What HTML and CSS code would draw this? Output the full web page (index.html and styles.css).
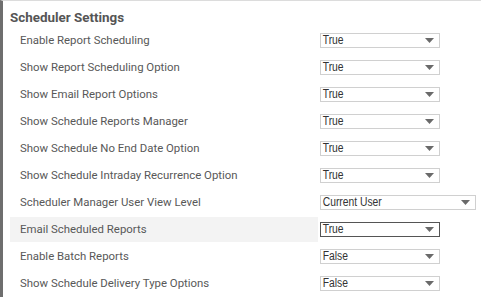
FILE: index.html
```html
<!DOCTYPE html>
<html>
<head>
<meta charset="utf-8">
<link rel="stylesheet" href="styles.css">
</head>
<body>
<div class="panel">
  <div class="title">Scheduler Settings</div>
  <div class="row"><div class="label">Enable Report Scheduling</div><div class="sel"><span>True</span><svg class="arr" width="9" height="5" viewBox="0 0 9 5"><path d="M0 0H9L4.5 5Z"/></svg></div></div>
  <div class="row"><div class="label">Show Report Scheduling Option</div><div class="sel"><span>True</span><svg class="arr" width="9" height="5" viewBox="0 0 9 5"><path d="M0 0H9L4.5 5Z"/></svg></div></div>
  <div class="row"><div class="label">Show Email Report Options</div><div class="sel"><span>True</span><svg class="arr" width="9" height="5" viewBox="0 0 9 5"><path d="M0 0H9L4.5 5Z"/></svg></div></div>
  <div class="row"><div class="label">Show Schedule Reports Manager</div><div class="sel"><span>True</span><svg class="arr" width="9" height="5" viewBox="0 0 9 5"><path d="M0 0H9L4.5 5Z"/></svg></div></div>
  <div class="row"><div class="label">Show Schedule No End Date Option</div><div class="sel"><span>True</span><svg class="arr" width="9" height="5" viewBox="0 0 9 5"><path d="M0 0H9L4.5 5Z"/></svg></div></div>
  <div class="row"><div class="label">Show Schedule Intraday Recurrence Option</div><div class="sel"><span>True</span><svg class="arr" width="9" height="5" viewBox="0 0 9 5"><path d="M0 0H9L4.5 5Z"/></svg></div></div>
  <div class="row"><div class="label">Scheduler Manager User View Level</div><div class="sel wide"><span>Current User</span><svg class="arr" width="9" height="5" viewBox="0 0 9 5"><path d="M0 0H9L4.5 5Z"/></svg></div></div>
  <div class="row active"><div class="label">Email Scheduled Reports</div><div class="sel focus"><span>True</span><svg class="arr" width="9" height="5" viewBox="0 0 9 5"><path d="M0 0H9L4.5 5Z"/></svg></div></div>
  <div class="row"><div class="label">Enable Batch Reports</div><div class="sel"><span>False</span><svg class="arr" width="9" height="5" viewBox="0 0 9 5"><path d="M0 0H9L4.5 5Z"/></svg></div></div>
  <div class="row"><div class="label">Show Schedule Delivery Type Options</div><div class="sel"><span>False</span><svg class="arr" width="9" height="5" viewBox="0 0 9 5"><path d="M0 0H9L4.5 5Z"/></svg></div></div>
</div>
</body>
</html>
```
FILE: styles.css
```css
html, body {
  margin: 0;
  padding: 0;
  background: #fff;
}
.panel {
  border-left: 3px solid #6e6e6e;
  border-top: 1px solid #dcdcdc;
  height: 296px;
  font-family: Roboto, "Liberation Sans", sans-serif;
  color: #555;
}
.title {
  height: 26px;
  line-height: 33px;
  padding-left: 7px;
  font-size: 13.4px;
  font-weight: bold;
  color: #555;
}
.row {
  height: 27px;
  display: flex;
  align-items: center;
  margin-left: 7px;
}
.label {
  width: 298px;
  height: 25px;
  line-height: 25px;
  padding-left: 10px;
  font-size: 11.4px;
  color: #585858;
  flex: none;
}
.row.active .label {
  background: #f3f3f3;
}
.sel {
  margin-left: 2px;
  width: 113px;
  height: 13px;
  border: 1px solid #d0d0d0;
  display: flex;
  align-items: center;
  justify-content: space-between;
  padding: 0 5px 0 0;
  box-sizing: content-box;
  font-family: "Liberation Sans", Arial, sans-serif;
  font-size: 12px;
  color: #333;
  flex: none;
}
.sel span {
  padding-left: 2px;
  line-height: 13px;
  transform: scaleX(0.86);
  transform-origin: left center;
}
.sel.wide {
  width: 149px;
}
.sel.focus {
  border-color: #555;
}
.arr {
  fill: #6a6a6a;
  display: block;
}
```
